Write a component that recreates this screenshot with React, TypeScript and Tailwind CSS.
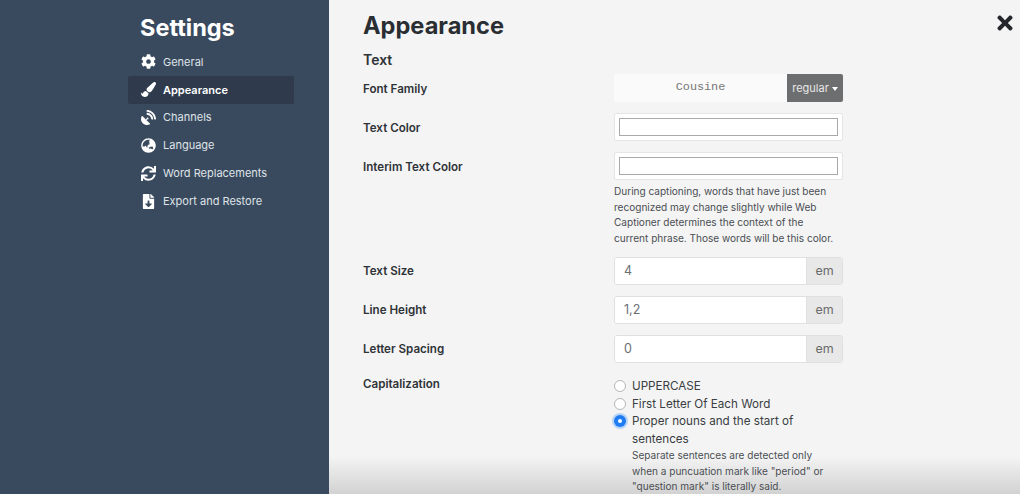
import { FaCog, FaPaintBrush, FaSatelliteDish, FaGlobeAsia, FaSync, FaFileDownload, FaTimes } from 'react-icons/fa';

const navItems = [
    { label: 'General', icon: FaCog },
    { label: 'Appearance', icon: FaPaintBrush, active: true },
    { label: 'Channels', icon: FaSatelliteDish },
    { label: 'Language', icon: FaGlobeAsia },
    { label: 'Word Replacements', icon: FaSync },
    { label: 'Export and Restore', icon: FaFileDownload },
];

const Label = ({ children }: { children: string }) => (
    <div className="w-[251px] shrink-0 text-[11.6px] font-semibold text-[#2f3338]">{children}</div>
);

const UnitInput = ({ label, value }: { label: string; value: string }) => (
    <div className="flex h-[28px] items-start">
        <div className="pt-[6px]"><Label>{label}</Label></div>
        <div className="flex h-[28px] w-[229px] overflow-hidden rounded-[3px] border border-[#e0e0e0]">
            <div className="flex flex-1 items-center bg-white px-[9px] text-[12.5px] text-[#6b6f73]">{value}</div>
            <div className="flex w-[36px] items-center justify-center border-l border-[#e0e0e0] bg-[#e8e8e8] text-[12.5px] text-[#6b6b6b]">em</div>
        </div>
    </div>
);

const ColorInput = ({ label }: { label: string }) => (
    <div className="flex h-[28px] items-start">
        <div className="pt-[7px]"><Label>{label}</Label></div>
        <div className="h-[28px] w-[229px] rounded-[2px] border border-[#e3e5e8] bg-white px-[4px] py-[4px]">
            <div className="h-[18px] border border-[#a9a9a9] bg-white" />
        </div>
    </div>
);

const Radio = ({ checked }: { checked?: boolean }) =>
    checked ? (
        <span className="mt-[2px] flex size-[12px] shrink-0 items-center justify-center rounded-full bg-[#1f7cf2] ring-[2px] ring-[#b9d4f8]">
            <span className="size-[4px] rounded-full bg-white" />
        </span>
    ) : (
        <span className="mt-[2px] size-[12px] shrink-0 rounded-full border border-[#b3b6ba] bg-white" />
    );

const App = () => {
    return (
        <div className="relative flex h-[494px] w-[1020px] overflow-hidden bg-[#f4f4f4] font-['Inter',sans-serif]">
            {/* Sidebar */}
            <aside className="w-[329px] shrink-0 bg-[#3a4a5e] pl-[128px] pr-[35px] pt-[13px] text-[#dfe3e8]">
                <h2 className="pl-[12px] text-[23.5px] font-bold leading-[30px] text-white">Settings</h2>
                <nav className="mt-[5px] flex flex-col">
                    {navItems.map(({ label, icon: Icon, active }) => (
                        <div
                            key={label}
                            className={`flex h-[27.85px] items-center rounded-[2px] text-[11px] ${active ? 'bg-[#2f3b4c] font-semibold text-white' : ''}`}
                        >
                            <span className="flex w-[35px] justify-center pl-[5px] text-white">
                                <Icon className="size-[15px]" />
                            </span>
                            {label}
                        </div>
                    ))}
                </nav>
            </aside>

            {/* Main */}
            <main className="relative z-10 flex-1 pl-[35px] pt-[10px] text-[#2f3338]">
                <h1 className="ml-[-1px] text-[23.6px] font-bold leading-[32px] text-[#2a2e33]">Appearance</h1>
                <h3 className="ml-[-1px] mt-[8px] text-[14px] font-semibold leading-[20px]">Text</h3>

                <div className="ml-[-1px]">
                    <div className="mt-[4px] flex h-[28px] items-start">
                        <div className="pt-[7px]"><Label>Font Family</Label></div>
                        <div className="flex h-[28px] w-[229px]">
                            <div className="flex w-[173px] items-center justify-center rounded-l-[2px] bg-[#fafafa] font-['Liberation_Mono',monospace] text-[11.8px] text-[#777]">
                                Cousine
                            </div>
                            <div className="flex flex-1 items-center justify-center gap-[3px] rounded-r-[2px] bg-[#6d6e70] text-[11px] text-[#e8e8e8]">
                                regular
                                <span className="mt-[1px] border-x-[3px] border-t-[4px] border-x-transparent border-t-white" />
                            </div>
                        </div>
                    </div>

                    <div className="mt-[11px]"><ColorInput label="Text Color" /></div>
                    <div className="mt-[11px]"><ColorInput label="Interim Text Color" /></div>
                    <p className="ml-[251px] mt-[4px] w-[225px] text-[10.05px] leading-[15.5px] text-[#4a4e53]">
                        During captioning, words that have just been recognized may change slightly while Web Captioner determines the context of the current phrase. Those words will be this color.
                    </p>

                    <div className="mt-[11px]"><UnitInput label="Text Size" value="4" /></div>
                    <div className="mt-[11px]"><UnitInput label="Line Height" value="1,2" /></div>
                    <div className="mt-[11px]"><UnitInput label="Letter Spacing" value="0" /></div>

                    <div className="mt-[8px] flex items-start">
                        <div className="pt-[5px]"><Label>Capitalization</Label></div>
                        <div className="w-[229px] pt-[7px] text-[11.65px] leading-[17.5px] text-[#3a3e43]">
                            <div className="flex gap-[6px]"><Radio />UPPERCASE</div>
                            <div className="flex gap-[6px]"><Radio />First Letter Of Each Word</div>
                            <div className="flex gap-[6px]"><Radio checked />Proper nouns and the start of sentences</div>
                            <p className="ml-[18px] w-[195px] text-[10.05px] leading-[15.5px] text-[#4a4e53]">
                                Separate sentences are detected only when a puncuation mark like "period" or "question mark" is literally said.
                            </p>
                        </div>
                    </div>
                </div>
            </main>

            <FaTimes className="absolute right-[4px] top-[12px] z-10 size-[22px] text-[#23272c]" />
            {/* Scroll fade at the bottom of the panel */}
            <div className="absolute bottom-0 left-[329px] right-0 h-[38px] bg-gradient-to-b from-transparent to-[#d2d2d2]" />
        </div>
    );
};

export default App;
